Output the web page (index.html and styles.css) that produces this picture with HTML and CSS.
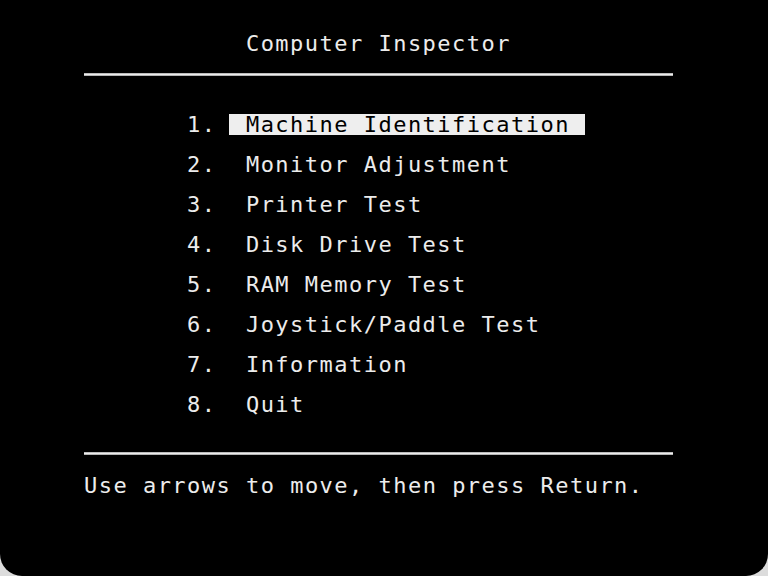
FILE: index.html
```html
<!DOCTYPE html>
<html lang="en">
<head>
<meta charset="utf-8">
<title>Computer Inspector</title>
<link rel="stylesheet" href="styles.css">
</head>
<body>
<main class="screen">
  <h1 class="title">Computer Inspector</h1>
  <hr class="rule rule-top">
  <ol class="menu">
    <li class="item"><span class="num">1.</span><span class="label selected">Machine Identification</span></li>
    <li class="item"><span class="num">2.</span><span class="label">Monitor Adjustment</span></li>
    <li class="item"><span class="num">3.</span><span class="label">Printer Test</span></li>
    <li class="item"><span class="num">4.</span><span class="label">Disk Drive Test</span></li>
    <li class="item"><span class="num">5.</span><span class="label">RAM Memory Test</span></li>
    <li class="item"><span class="num">6.</span><span class="label">Joystick/Paddle Test</span></li>
    <li class="item"><span class="num">7.</span><span class="label">Information</span></li>
    <li class="item"><span class="num">8.</span><span class="label">Quit</span></li>
  </ol>
  <hr class="rule rule-bottom">
  <p class="hint">Use arrows to move, then press Return.</p>
</main>
</body>
</html>
```

FILE: styles.css
```css
:root {
  --cell: 14.72px;
  --fg: #ececec;
}

html, body {
  margin: 0;
  padding: 0;
  background: #dcdcdc;
}

.screen {
  box-sizing: border-box;
  width: 768px;
  height: 576px;
  background: #000;
  border-radius: 0 0 22px 22px;
  padding: 34px 0 0 84px;
  display: flex;
  flex-direction: column;
  color: var(--fg);
  font-family: "DejaVu Sans Mono", "Liberation Mono", monospace;
  font-size: 22px;
  line-height: 20px;
  letter-spacing: 1.48px;
  white-space: pre;
}

.title {
  margin: 0 0 0 calc(var(--cell) * 11);
  font: inherit;
  height: 20px;
}

.rule {
  margin: 0;
  border: 0;
  width: calc(var(--cell) * 40);
  height: 3px;
  background: linear-gradient(#9a9a9a, #f4f4f4 45%, #9a9a9a);
}

.rule-top {
  margin-top: 19px;
}

.menu {
  list-style: none;
  margin: 39px 0 0 calc(var(--cell) * 7);
  padding: 0;
  display: flex;
  flex-direction: column;
  gap: 20px;
}

.item {
  display: flex;
  align-items: flex-start;
  height: 20px;
}

.num {
  width: calc(var(--cell) * 4);
}

.label.selected {
  background: #eeeeee;
  color: #000;
  margin: -1px 0 0 calc(-1 * var(--cell) - 2px);
  padding: 1px var(--cell) 0 calc(var(--cell) + 2px);
  line-height: 20px;
}

.rule-bottom {
  margin-top: 37px;
}

.hint {
  margin: 21px 0 0;
  height: 20px;
}
```
